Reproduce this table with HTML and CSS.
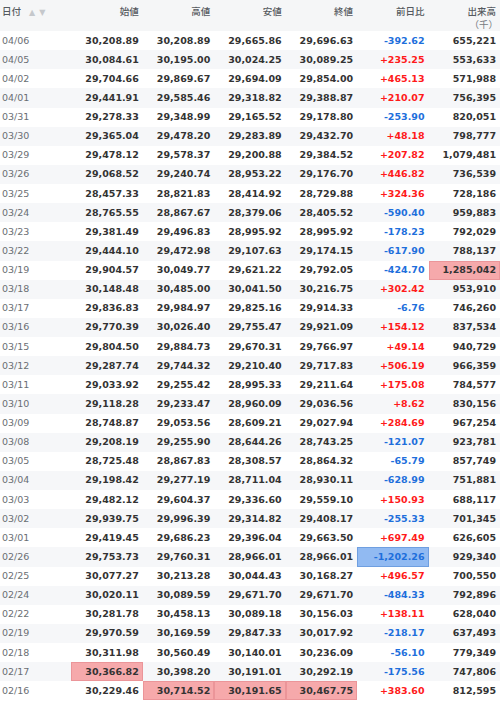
FILE: index.html
```html
<!DOCTYPE html>
<html lang="ja">
<head>
<meta charset="utf-8">
<link rel="stylesheet" href="styles.css">
</head>
<body>
<table class="tbl">
<thead>
<tr>
<th class="date-h">日付<span class="sort"><span class="up">▲</span><span class="dn">▼</span></span></th>
<th>始値</th><th>高値</th><th>安値</th><th>終値</th><th>前日比</th><th><span class="lbl">出来高</span><span class="unit">（千）</span></th>
</tr>
</thead>
<tbody>
<tr><td>04/06</td><td>30,208.89</td><td>30,208.89</td><td>29,665.86</td><td>29,696.63</td><td class="dn">-392.62</td><td>655,221</td></tr>
<tr><td>04/05</td><td>30,084.61</td><td>30,195.00</td><td>30,024.25</td><td>30,089.25</td><td class="up">+235.25</td><td>553,633</td></tr>
<tr><td>04/02</td><td>29,704.66</td><td>29,869.67</td><td>29,694.09</td><td>29,854.00</td><td class="up">+465.13</td><td>571,988</td></tr>
<tr><td>04/01</td><td>29,441.91</td><td>29,585.46</td><td>29,318.82</td><td>29,388.87</td><td class="up">+210.07</td><td>756,395</td></tr>
<tr><td>03/31</td><td>29,278.33</td><td>29,348.99</td><td>29,165.52</td><td>29,178.80</td><td class="dn">-253.90</td><td>820,051</td></tr>
<tr><td>03/30</td><td>29,365.04</td><td>29,478.20</td><td>29,283.89</td><td>29,432.70</td><td class="up">+48.18</td><td>798,777</td></tr>
<tr><td>03/29</td><td>29,478.12</td><td>29,578.37</td><td>29,200.88</td><td>29,384.52</td><td class="up">+207.82</td><td>1,079,481</td></tr>
<tr><td>03/26</td><td>29,068.52</td><td>29,240.74</td><td>28,953.22</td><td>29,176.70</td><td class="up">+446.82</td><td>736,539</td></tr>
<tr><td>03/25</td><td>28,457.33</td><td>28,821.83</td><td>28,414.92</td><td>28,729.88</td><td class="up">+324.36</td><td>728,186</td></tr>
<tr><td>03/24</td><td>28,765.55</td><td>28,867.67</td><td>28,379.06</td><td>28,405.52</td><td class="dn">-590.40</td><td>959,883</td></tr>
<tr><td>03/23</td><td>29,381.49</td><td>29,496.83</td><td>28,995.92</td><td>28,995.92</td><td class="dn">-178.23</td><td>792,029</td></tr>
<tr><td>03/22</td><td>29,444.10</td><td>29,472.98</td><td>29,107.63</td><td>29,174.15</td><td class="dn">-617.90</td><td>788,137</td></tr>
<tr><td>03/19</td><td>29,904.57</td><td>30,049.77</td><td>29,621.22</td><td>29,792.05</td><td class="dn">-424.70</td><td class="hl-red">1,285,042</td></tr>
<tr><td>03/18</td><td>30,148.48</td><td>30,485.00</td><td>30,041.50</td><td>30,216.75</td><td class="up">+302.42</td><td>953,910</td></tr>
<tr><td>03/17</td><td>29,836.83</td><td>29,984.97</td><td>29,825.16</td><td>29,914.33</td><td class="dn">-6.76</td><td>746,260</td></tr>
<tr><td>03/16</td><td>29,770.39</td><td>30,026.40</td><td>29,755.47</td><td>29,921.09</td><td class="up">+154.12</td><td>837,534</td></tr>
<tr><td>03/15</td><td>29,804.50</td><td>29,884.73</td><td>29,670.31</td><td>29,766.97</td><td class="up">+49.14</td><td>940,729</td></tr>
<tr><td>03/12</td><td>29,287.74</td><td>29,744.32</td><td>29,210.40</td><td>29,717.83</td><td class="up">+506.19</td><td>966,359</td></tr>
<tr><td>03/11</td><td>29,033.92</td><td>29,255.42</td><td>28,995.33</td><td>29,211.64</td><td class="up">+175.08</td><td>784,577</td></tr>
<tr><td>03/10</td><td>29,118.28</td><td>29,233.47</td><td>28,960.09</td><td>29,036.56</td><td class="up">+8.62</td><td>830,156</td></tr>
<tr><td>03/09</td><td>28,748.87</td><td>29,053.56</td><td>28,609.21</td><td>29,027.94</td><td class="up">+284.69</td><td>967,254</td></tr>
<tr><td>03/08</td><td>29,208.19</td><td>29,255.90</td><td>28,644.26</td><td>28,743.25</td><td class="dn">-121.07</td><td>923,781</td></tr>
<tr><td>03/05</td><td>28,725.48</td><td>28,867.83</td><td>28,308.57</td><td>28,864.32</td><td class="dn">-65.79</td><td>857,749</td></tr>
<tr><td>03/04</td><td>29,198.42</td><td>29,277.19</td><td>28,711.04</td><td>28,930.11</td><td class="dn">-628.99</td><td>751,881</td></tr>
<tr><td>03/03</td><td>29,482.12</td><td>29,604.37</td><td>29,336.60</td><td>29,559.10</td><td class="up">+150.93</td><td>688,117</td></tr>
<tr><td>03/02</td><td>29,939.75</td><td>29,996.39</td><td>29,314.82</td><td>29,408.17</td><td class="dn">-255.33</td><td>701,345</td></tr>
<tr><td>03/01</td><td>29,419.45</td><td>29,686.23</td><td>29,396.04</td><td>29,663.50</td><td class="up">+697.49</td><td>626,605</td></tr>
<tr><td>02/26</td><td>29,753.73</td><td>29,760.31</td><td>28,966.01</td><td>28,966.01</td><td class="dn hl-blue">-1,202.26</td><td>929,340</td></tr>
<tr><td>02/25</td><td>30,077.27</td><td>30,213.28</td><td>30,044.43</td><td>30,168.27</td><td class="up">+496.57</td><td>700,550</td></tr>
<tr><td>02/24</td><td>30,020.11</td><td>30,089.59</td><td>29,671.70</td><td>29,671.70</td><td class="dn">-484.33</td><td>792,896</td></tr>
<tr><td>02/22</td><td>30,281.78</td><td>30,458.13</td><td>30,089.18</td><td>30,156.03</td><td class="up">+138.11</td><td>628,040</td></tr>
<tr><td>02/19</td><td>29,970.59</td><td>30,169.59</td><td>29,847.33</td><td>30,017.92</td><td class="dn">-218.17</td><td>637,493</td></tr>
<tr><td>02/18</td><td>30,311.98</td><td>30,560.49</td><td>30,140.01</td><td>30,236.09</td><td class="dn">-56.10</td><td>779,349</td></tr>
<tr><td>02/17</td><td class="hl-red">30,366.82</td><td>30,398.20</td><td>30,191.01</td><td>30,292.19</td><td class="dn">-175.56</td><td>747,806</td></tr>
<tr><td>02/16</td><td>30,229.46</td><td class="hl-red">30,714.52</td><td class="hl-red">30,191.65</td><td class="hl-red">30,467.75</td><td class="up">+383.60</td><td>812,595</td></tr>
</tbody>
</table>
</body>
</html>
```
FILE: styles.css
```css
html, body {
  margin: 0;
  padding: 0;
  background: #ffffff;
}
.tbl {
  width: 500px;
  table-layout: fixed;
  border-collapse: collapse;
  font-family: "DejaVu Sans", Verdana, "Noto Sans CJK JP", sans-serif;
  font-size: 9.5px;
}
.tbl th {
  height: 31px;
  padding: 5px 4px 0 0;
  background: #f5f6f7;
  color: #555a60;
  font-family: "Noto Sans CJK JP", sans-serif;
  font-size: 9.5px;
  font-weight: 500;
  text-align: right;
  vertical-align: top;
  line-height: 12px;
  box-sizing: border-box;
}
.tbl th.date-h {
  text-align: left;
  padding-left: 2px;
}
.lbl {
  display: block;
  height: 12px;
  line-height: 12px;
}
.sort {
  margin-left: 8px;
  color: #c5c8cc;
  font-family: "DejaVu Sans", sans-serif;
  font-size: 8px;
  letter-spacing: 4px;
}
.unit {
  display: block;
  margin-top: 2px;
  margin-right: -2px;
  color: #777b80;
  font-weight: 400;
  line-height: 11px;
  height: 11px;
}
.tbl td {
  height: 19.14px;
  padding: 0 4px 0 0;
  text-align: right;
  font-weight: bold;
  color: #333333;
  white-space: nowrap;
  box-sizing: border-box;
  line-height: 12px;
}
.tbl td:first-child {
  text-align: left;
  padding-left: 2px;
  font-weight: normal;
  color: #6a6e73;
}
.tbl tbody tr:nth-child(even) td {
  background: #f6f7f9;
}
.tbl td.up {
  color: #ff1a1a;
}
.tbl td.dn {
  color: #1e6fdc;
}
.tbl tbody tr td.hl-red {
  background: #f6a9ab;
  box-shadow: inset 0 0 0 1px #eb9599;
}
.tbl tbody tr td.hl-blue {
  background: #91baf2;
  box-shadow: inset 0 0 0 1px #6f9fe0;
}
```
